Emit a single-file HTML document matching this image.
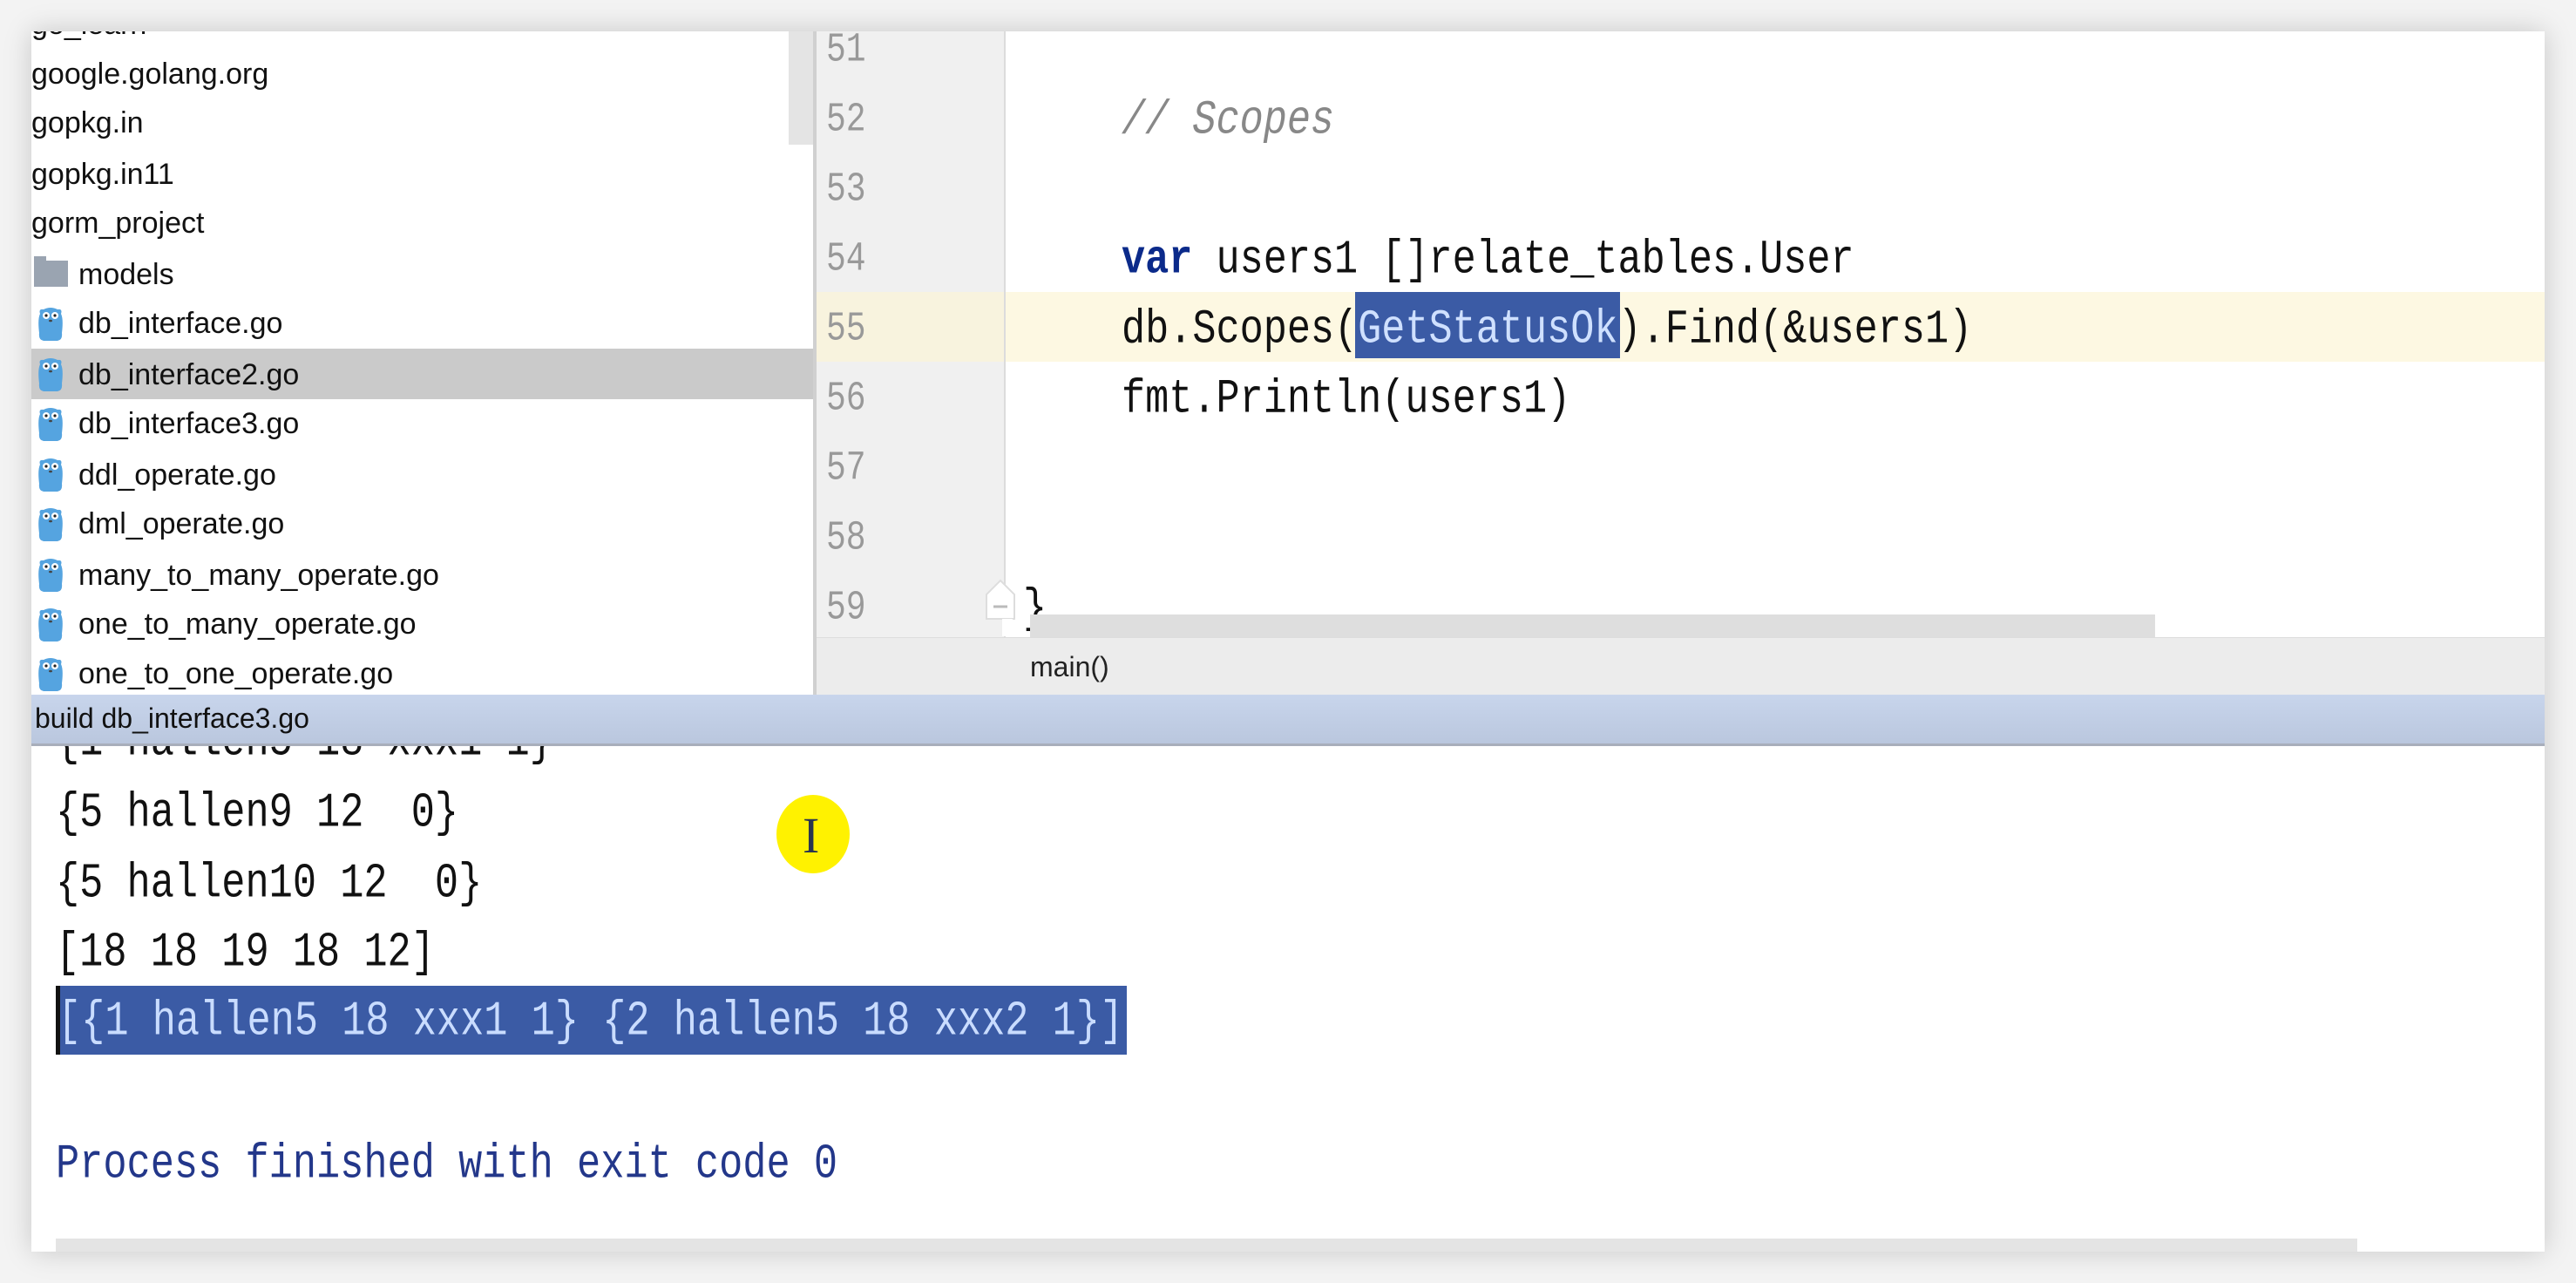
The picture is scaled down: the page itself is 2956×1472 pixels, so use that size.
<!DOCTYPE html>
<html><head><meta charset="utf-8"><style>
body{margin:0;width:2956px;height:1472px;background:#f3f3f3;position:relative;overflow:hidden;font-family:"Liberation Sans",sans-serif}
.a{position:absolute}
.win{left:36px;top:36px;width:2884px;height:1400px;background:#fff;box-shadow:0 0 30px rgba(0,0,0,.18)}
.side{font-size:34px;color:#111;white-space:nowrap;line-height:40px}
.mono{font-family:"Liberation Mono",monospace;white-space:pre;transform-origin:0 50%;transform:scaleY(1.22)}
.code{font-size:45.2px;color:#111;line-height:50px}
.ln{font-family:"Liberation Mono",monospace;font-size:38px;color:#999;line-height:50px;transform:scaleY(1.25);transform-origin:0 50%}
.con{font-size:45.3px;color:#111;line-height:50px}
</style></head><body>
<div class="a win"></div>
<div class="a" style="left:36px;top:36px;width:897px;height:763px;background:#fff;overflow:hidden">
<div class="a" style="left:869px;top:0;width:28px;height:130px;background:#e4e4e4"></div>
<div class="a" style="left:0;top:364px;width:897px;height:58px;background:#cacaca"></div>
</div>
<svg width="0" height="0" style="position:absolute"><defs>
<g id="go"><path d="M4 8 Q2 2 8 3 Q16 -1 24 3 Q30 2 28 8 Q31 14 29 30 Q30 38 24 39 L8 39 Q2 38 3 30 Q1 14 4 8Z" fill="#55a4e0"/><circle cx="11" cy="10" r="4" fill="#fff"/><circle cx="21" cy="10" r="4" fill="#fff"/><circle cx="11" cy="10" r="1.6" fill="#222"/><circle cx="21" cy="10" r="1.6" fill="#222"/><ellipse cx="16" cy="16" rx="2" ry="1.3" fill="#444"/></g>
</defs></svg>
<div class="a side" style="left:36px;top:8px;clip-path:inset(28px 0 0 0)">go_learn</div>
<div class="a side" style="left:36px;top:65px">google.golang.org</div>
<div class="a side" style="left:36px;top:121px">gopkg.in</div>
<div class="a side" style="left:36px;top:180px">gopkg.in11</div>
<div class="a side" style="left:36px;top:236px">gorm_project</div>
<div class="a" style="left:39px;top:299px;width:39px;height:30px;background:#9aa4b1"></div>
<div class="a" style="left:39px;top:294px;width:14px;height:8px;background:#9aa4b1"></div>
<div class="a side" style="left:90px;top:295px">models</div>
<svg class="a" style="left:42px;top:352px" width="32" height="40"><use href="#go"/></svg>
<div class="a side" style="left:90px;top:351px">db_interface.go</div>
<svg class="a" style="left:42px;top:410px" width="32" height="40"><use href="#go"/></svg>
<div class="a side" style="left:90px;top:410px">db_interface2.go</div>
<svg class="a" style="left:42px;top:467px" width="32" height="40"><use href="#go"/></svg>
<div class="a side" style="left:90px;top:466px">db_interface3.go</div>
<svg class="a" style="left:42px;top:525px" width="32" height="40"><use href="#go"/></svg>
<div class="a side" style="left:90px;top:525px">ddl_operate.go</div>
<svg class="a" style="left:42px;top:582px" width="32" height="40"><use href="#go"/></svg>
<div class="a side" style="left:90px;top:581px">dml_operate.go</div>
<svg class="a" style="left:42px;top:640px" width="32" height="40"><use href="#go"/></svg>
<div class="a side" style="left:90px;top:640px">many_to_many_operate.go</div>
<svg class="a" style="left:42px;top:697px" width="32" height="40"><use href="#go"/></svg>
<div class="a side" style="left:90px;top:696px">one_to_many_operate.go</div>
<svg class="a" style="left:42px;top:754px" width="32" height="40"><use href="#go"/></svg>
<div class="a side" style="left:90px;top:753px">one_to_one_operate.go</div>
<div class="a" style="left:933px;top:36px;width:4px;height:763px;background:#d0d0d0"></div>
<div class="a" style="left:937px;top:36px;width:215px;height:695px;background:#f0f0f0;border-right:2px solid #dcdcdc"></div>
<div class="a" style="left:1154px;top:335px;width:1766px;height:80px;background:#fdf8e2"></div>
<div class="a" style="left:937px;top:335px;width:215px;height:80px;background:#f8f3de"></div>
<div class="a ln" style="left:948px;top:33px">51</div>
<div class="a ln" style="left:948px;top:113px">52</div>
<div class="a ln" style="left:948px;top:193px">53</div>
<div class="a ln" style="left:948px;top:273px">54</div>
<div class="a ln" style="left:948px;top:353px">55</div>
<div class="a ln" style="left:948px;top:433px">56</div>
<div class="a ln" style="left:948px;top:513px">57</div>
<div class="a ln" style="left:948px;top:593px">58</div>
<div class="a ln" style="left:948px;top:673px">59</div>
<div class="a mono code" style="left:1287px;top:113px;color:#888;font-style:italic">// Scopes</div>
<div class="a mono code" style="left:1287px;top:273px"><b style="color:#0b2a8a;font-weight:bold">var</b> users1 []relate_tables.User</div>
<div class="a" style="left:1555px;top:335px;width:304px;height:76px;background:#3b5ba5"></div>
<div class="a mono code" style="left:1287px;top:353px">db.Scopes(<span style="color:#cfe0ff">GetStatusOk</span>).Find(&amp;users1)</div>
<div class="a mono code" style="left:1287px;top:433px">fmt.Println(users1)</div>
<div class="a mono code" style="left:1174px;top:673px">}</div>
<div class="a" style="left:1182px;top:705px;width:1291px;height:26px;background:#dedede"></div>
<svg class="a" style="left:1128px;top:662px" width="44" height="70"><path d="M4 48 L4 20 L20 4 L36 20 L36 48 Z" fill="#fff" stroke="#ddd" stroke-width="2"/><line x1="12" y1="34" x2="28" y2="34" stroke="#bbb" stroke-width="3"/><rect x="22" y="48" width="12" height="20" fill="#fff"/></svg>
<div class="a" style="left:937px;top:731px;width:1983px;height:66px;background:#ececec;border-top:1px solid #ddd"></div>
<div class="a" style="left:1182px;top:747px;font-size:32px;color:#222">main()</div>
<div class="a" style="left:36px;top:797px;width:2884px;height:56px;background:linear-gradient(#c8d5ec,#bac7de);border-bottom:3px solid #a8aebb"></div>
<div class="a" style="left:40px;top:806px;font-size:32px;color:#111">build db_interface3.go</div>
<div class="a" style="left:36px;top:856px;width:2884px;height:580px;overflow:hidden">
<div class="a mono con" style="left:28px;top:-30px">{1 hallen5 18 xxx1 1}</div>
<div class="a mono con" style="left:28px;top:52px">{5 hallen9 12  0}</div>
<div class="a mono con" style="left:28px;top:133px">{5 hallen10 12  0}</div>
<div class="a mono con" style="left:28px;top:212px">[18 18 19 18 12]</div>
<div class="a" style="left:28px;top:275px;width:1224px;height:79px;background:#3b5ba5;border-left:5px solid #111"></div>
<div class="a mono con" style="left:30px;top:291px;color:#c9dcff">[{1 hallen5 18 xxx1 1} {2 hallen5 18 xxx2 1}]</div>
<div class="a mono con" style="left:28px;top:455px;color:#23378a">Process finished with exit code 0</div>
<div class="a" style="left:28px;top:565px;width:2641px;height:15px;background:#e4e4e4"></div>
</div>
<div class="a" style="left:891px;top:912px;width:84px;height:90px;border-radius:50%;background:#fff200"></div>
<div class="a" style="left:921px;top:925px;font-family:'Liberation Serif',serif;font-size:58px;color:#2a3550">I</div>
</body></html>
